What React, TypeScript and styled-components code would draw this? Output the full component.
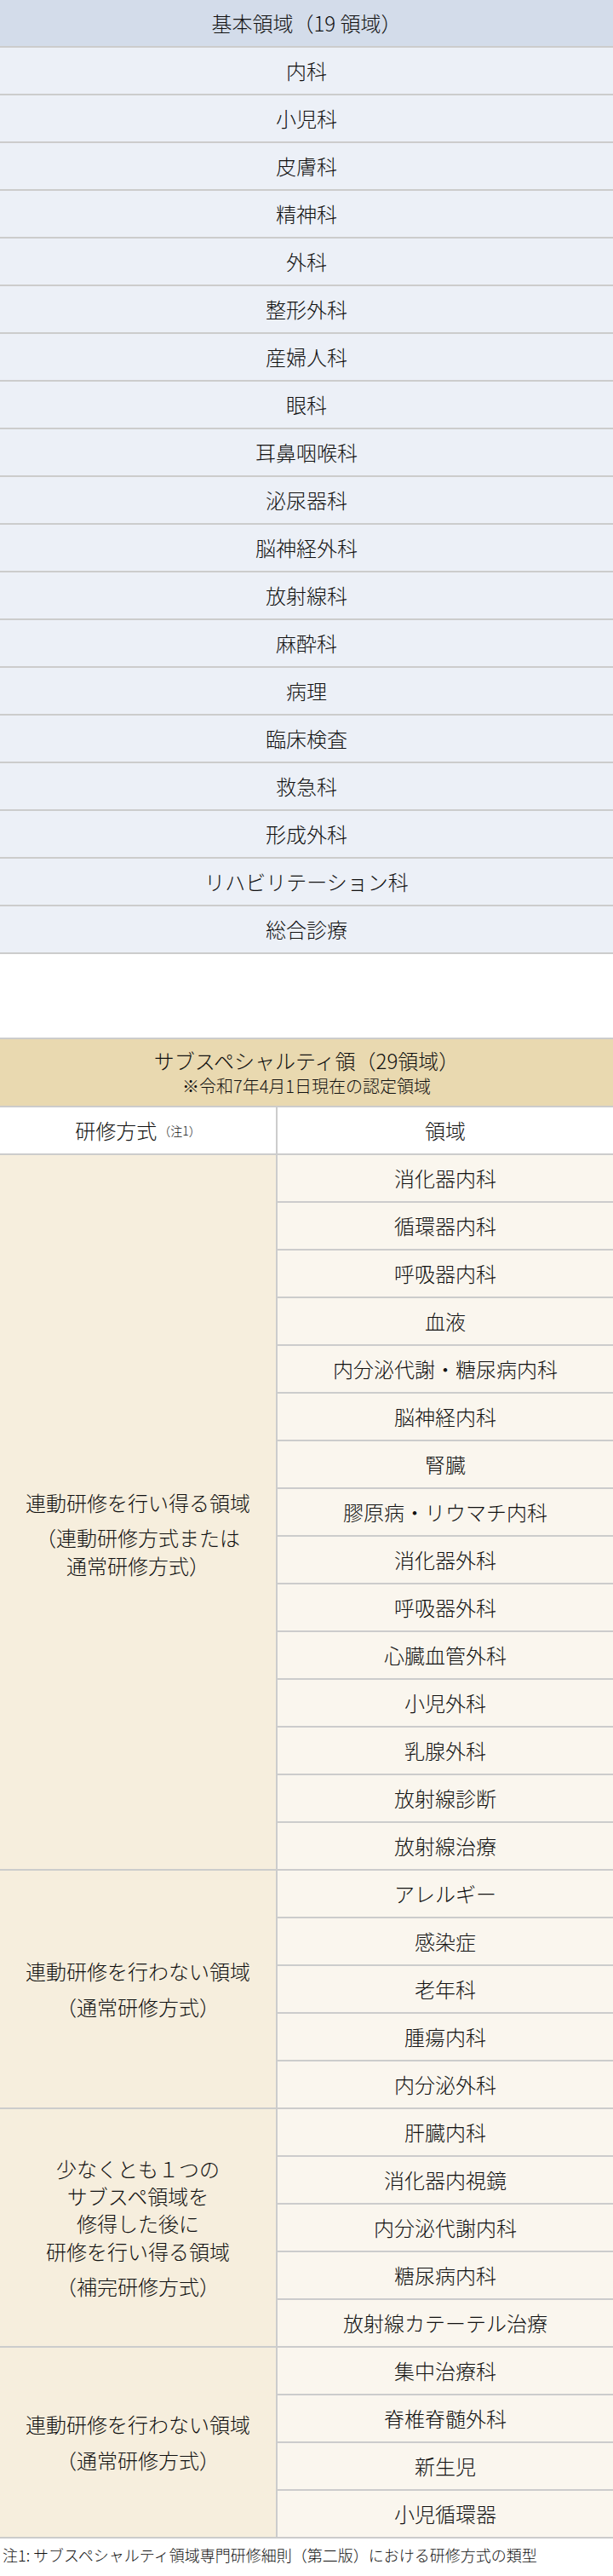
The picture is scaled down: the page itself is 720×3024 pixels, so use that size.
import React from 'react'
import styled, { createGlobalStyle } from 'styled-components'

const GlobalStyle = createGlobalStyle`
  * {
    box-sizing: border-box;
  }
  body {
    margin: 0;
    background-color: #ffffff;
    color: #111111;
    font-family: "Noto Sans CJK JP", "Noto Sans", sans-serif;
    font-weight: 300;
  }
`

const LINE = '#cccccc'

const PageStyled = styled.div`
  width: 720px;
`

const BasicTableStyled = styled.div`
  display: flex;
  flex-direction: column;
`

const BasicCellStyled = styled.div<{ head?: boolean }>`
  height: 56px;
  border-bottom: 2px solid ${LINE};
  background-color: ${props => props.head ? '#d3dcea' : '#ecf0f7'};
  display: flex;
  align-items: center;
  justify-content: center;
  font-size: 24px;
  line-height: 1;
`

const SubTableStyled = styled.div`
  margin-top: 98px;
  border-top: 2px solid ${LINE};
`

const SubHeadStyled = styled.div`
  height: 80px;
  border-bottom: 2px solid ${LINE};
  background-color: #e9d9b0;
  display: flex;
  flex-direction: column;
  align-items: center;
  justify-content: center;
  gap: 6px;
  line-height: 1.1;
`

const SubTitleStyled = styled.div`
  font-size: 24px;
`

const SubNoteStyled = styled.div`
  font-size: 20px;
`

const SplitRowStyled = styled.div`
  display: grid;
  grid-template-columns: 326px 1fr;
`

const ColHeadStyled = styled.div<{ left?: boolean }>`
  height: 56px;
  border-bottom: 2px solid ${LINE};
  border-right: ${props => props.left ? `2px solid ${LINE}` : 'none'};
  background-color: #ffffff;
  display: flex;
  align-items: center;
  justify-content: center;
  font-size: 24px;
  line-height: 1;
`

const NoteMarkStyled = styled.span`
  font-size: 14px;
  margin-left: 2px;
`

const GroupLabelStyled = styled.div<{ shift: number }>`
  border-right: 2px solid ${LINE};
  border-bottom: 2px solid ${LINE};
  background-color: #f6eedd;
  display: flex;
  flex-direction: column;
  align-items: center;
  justify-content: center;
  gap: 9px;
  padding-top: ${props => props.shift}px;
  text-align: center;
  font-size: 24px;
  line-height: 1.35;
`

const LabelBlockStyled = styled.div``

const FieldListStyled = styled.div`
  display: flex;
  flex-direction: column;
`

const FieldStyled = styled.div`
  height: 56px;
  border-bottom: 2px solid ${LINE};
  background-color: #faf6ee;
  display: flex;
  align-items: center;
  justify-content: center;
  font-size: 24px;
  line-height: 1;
`

const FootnoteStyled = styled.div`
  padding: 6px 0 0 3px;
  font-size: 18px;
  line-height: 27px;
`

type GroupType = {
  label: Array<Array<string>>,
  shift: number,
  fields: Array<string>
}

const basicFields = [
  '内科', '小児科', '皮膚科', '精神科', '外科', '整形外科', '産婦人科', '眼科', '耳鼻咽喉科',
  '泌尿器科', '脳神経外科', '放射線科', '麻酔科', '病理', '臨床検査', '救急科', '形成外科',
  'リハビリテーション科', '総合診療'
]

const groups: Array<GroupType> = [
  {
    label: [['連動研修を行い得る領域'], ['（連動研修方式または', '通常研修方式）']],
    shift: 52,
    fields: [
      '消化器内科', '循環器内科', '呼吸器内科', '血液', '内分泌代謝・糖尿病内科', '脳神経内科',
      '腎臓', '膠原病・リウマチ内科', '消化器外科', '呼吸器外科', '心臓血管外科', '小児外科',
      '乳腺外科', '放射線診断', '放射線治療'
    ]
  },
  {
    label: [['連動研修を行わない領域'], ['（通常研修方式）']],
    shift: 0,
    fields: ['アレルギー', '感染症', '老年科', '腫瘍内科', '内分泌外科']
  },
  {
    label: [['少なくとも１つの', 'サブスペ領域を', '修得した後に', '研修を行い得る領域'], ['（補完研修方式）']],
    shift: 0,
    fields: ['肝臓内科', '消化器内視鏡', '内分泌代謝内科', '糖尿病内科', '放射線カテーテル治療']
  },
  {
    label: [['連動研修を行わない領域'], ['（通常研修方式）']],
    shift: 0,
    fields: ['集中治療科', '脊椎脊髄外科', '新生児', '小児循環器']
  }
]

const renderGroup = (group: GroupType, index: number) => (
  <SplitRowStyled key={index}>
    <GroupLabelStyled shift={group.shift}>
      {group.label.map((lines, i) => (
        <LabelBlockStyled key={i}>
          {lines.map((line, j) => <div key={j}>{line}</div>)}
        </LabelBlockStyled>
      ))}
    </GroupLabelStyled>
    <FieldListStyled>
      {group.fields.map(field => <FieldStyled key={field}>{field}</FieldStyled>)}
    </FieldListStyled>
  </SplitRowStyled>
)

const App = () => (
  <PageStyled>
    <GlobalStyle />
    <BasicTableStyled>
      <BasicCellStyled head>基本領域（19 領域）</BasicCellStyled>
      {basicFields.map(field => <BasicCellStyled key={field}>{field}</BasicCellStyled>)}
    </BasicTableStyled>

    <SubTableStyled>
      <SubHeadStyled>
        <SubTitleStyled>サブスペシャルティ領（29領域）</SubTitleStyled>
        <SubNoteStyled>※令和7年4月1日現在の認定領域</SubNoteStyled>
      </SubHeadStyled>
      <SplitRowStyled>
        <ColHeadStyled left>研修方式<NoteMarkStyled>（注1）</NoteMarkStyled></ColHeadStyled>
        <ColHeadStyled>領域</ColHeadStyled>
      </SplitRowStyled>
      {groups.map(renderGroup)}
    </SubTableStyled>

    <FootnoteStyled>注1: サブスペシャルティ領域専門研修細則（第二版）における研修方式の類型</FootnoteStyled>
  </PageStyled>
)

export default App
